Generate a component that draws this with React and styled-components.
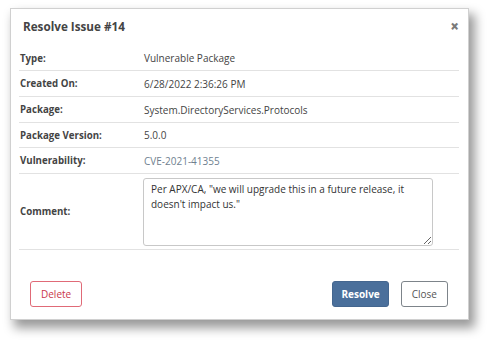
import React from "react";
import styled, { createGlobalStyle } from "styled-components";

const Global = createGlobalStyle`
  html, body { margin: 0; padding: 0; background: #fff; min-height: 100%; }
  body { font-family: "Open Sans", "Noto Sans", sans-serif; color: #333; }
  * { box-sizing: border-box; }
`;

const Page = styled.div`
  padding: 8px 0 24px 10px;
`;

const Dialog = styled.div`
  width: 459px;
  height: 312px;
  background: #fff;
  border: 1px solid #d0d0d0;
  box-shadow: 5px 7px 10px 1px rgba(0, 0, 0, 0.4);
  display: flex;
  flex-direction: column;
`;

const Header = styled.div`
  display: flex;
  align-items: center;
  justify-content: space-between;
  height: 34px;
  padding: 0 9px 0 12px;
`;

const Title = styled.h1`
  margin: 0;
  font-size: 11.7px;
  font-weight: 700;
  color: #444;
`;

const CloseX = styled.span`
  font-size: 15px;
  font-weight: 900;
  color: #7a7a7a;
  line-height: 1;
`;

const Body = styled.div`
  padding: 0 9px 0 8px;
  margin-top: 3px;
`;

const Row = styled.div`
  display: grid;
  grid-template-columns: 124px 1fr;
  align-items: center;
  height: ${(p) => p.h || 26}px;
  border-bottom: 1px solid #e2e2e2;
  padding-left: 1px;
`;

const Label = styled.div`
  font-size: 9.7px;
  font-weight: 700;
  color: #444;
`;

const Value = styled.div`
  font-size: 10px;
  color: ${(p) => (p.link ? "#6f7f8f" : "#444")};
`;

const TextArea = styled.textarea`
  width: 290px;
  height: 68px;
  resize: vertical;
  border: 1px solid #c8c8c8;
  border-radius: 3px;
  padding: 3px 7px;
  font-family: "Open Sans", "Noto Sans", sans-serif;
  font-size: 10px;
  line-height: 15px;
  color: #333;
  margin-left: -1px;
`;

const Footer = styled.div`
  display: flex;
  align-items: center;
  padding: 31px 20px 0 19px;
  gap: 12px;
`;

const Spacer = styled.div`
  flex: 1;
`;

const Button = styled.button`
  height: 26px;
  padding: 0 ${(p) => p.px || 10}px;
  border-radius: 3px;
  font-family: "Open Sans", "Noto Sans", sans-serif;
  font-size: 10px;
  font-weight: ${(p) => (p.variant === "primary" ? 700 : 400)};
  background: ${(p) => (p.variant === "primary" ? "#4a6f9b" : "#fff")};
  color: ${(p) =>
    p.variant === "primary" ? "#fff" : p.variant === "danger" ? "#c9374a" : "#555"};
  border: 1px solid
    ${(p) =>
      p.variant === "primary" ? "#44668f" : p.variant === "danger" ? "#e06a77" : "#7d848a"};
`;

export default function App() {
  return (
    <>
      <Global />
      <Page>
        <Dialog>
          <Header>
            <Title>Resolve Issue #14</Title>
            <CloseX>×</CloseX>
          </Header>
          <Body>
            <Row h={25}>
              <Label>Type:</Label>
              <Value>Vulnerable Package</Value>
            </Row>
            <Row>
              <Label>Created On:</Label>
              <Value>6/28/2022 2:36:26 PM</Value>
            </Row>
            <Row>
              <Label>Package:</Label>
              <Value>System.DirectoryServices.Protocols</Value>
            </Row>
            <Row h={25}>
              <Label>Package Version:</Label>
              <Value>5.0.0</Value>
            </Row>
            <Row>
              <Label>Vulnerability:</Label>
              <Value link>CVE-2021-41355</Value>
            </Row>
            <Row h={76}>
              <Label>Comment:</Label>
              <TextArea
                defaultValue={
                  'Per APX/CA, "we will upgrade this in a future release, it doesn\'t impact us."'
                }
              />
            </Row>
          </Body>
          <Footer>
            <Button variant="danger" px={10}>Delete</Button>
            <Spacer />
            <Button variant="primary" px={8}>Resolve</Button>
            <Button px={10}>Close</Button>
          </Footer>
        </Dialog>
      </Page>
    </>
  );
}
